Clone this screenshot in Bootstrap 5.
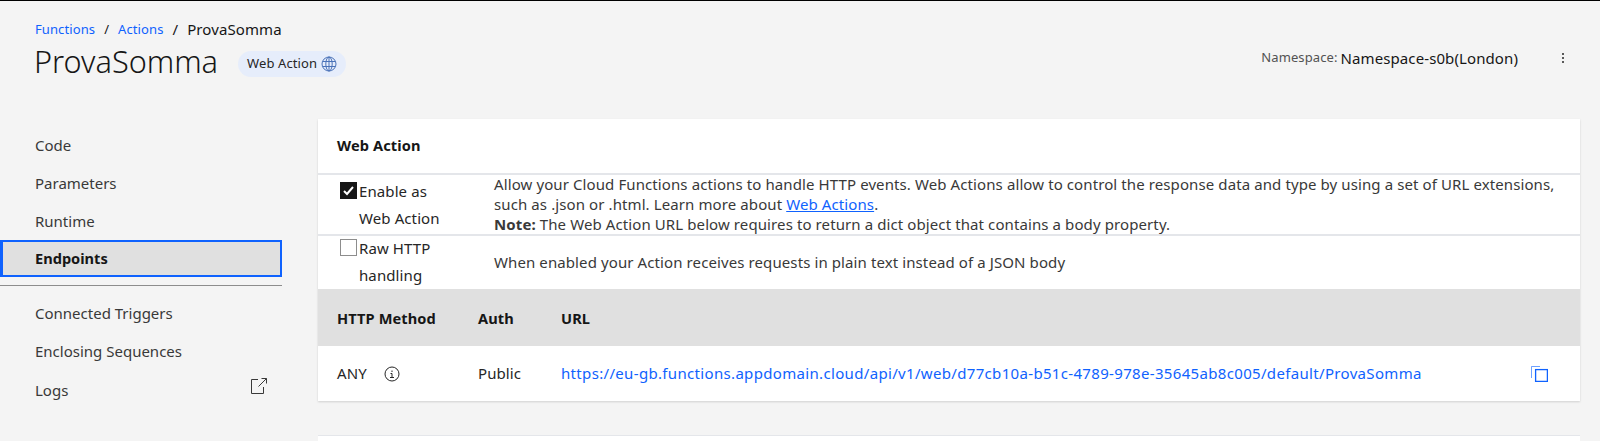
<!DOCTYPE html>
<html lang="en">
<head>
    <meta charset="UTF-8">
    <meta name="viewport" content="width=device-width, initial-scale=1.0">
    <title>ProvaSomma</title>
    <link href="https://cdn.jsdelivr.net/npm/bootstrap@5.3.0/dist/css/bootstrap.min.css" rel="stylesheet">
    <style>
        html, body { height: 441px; overflow: hidden; }
        body {
            background: #f4f4f4;
            border-top: 1px solid #000;
            font-family: "Noto Sans", "Open Sans", sans-serif;
            font-size: 15px;
            letter-spacing: .1px;
            color: #262626;
        }
        a { color: #0f62fe; text-decoration: none; }
        .page-top { padding: 20px 35px 0; height: 118px; }
        .crumbs { font-size: 13px; height: 17px; line-height: 17px; }
        .crumbs .breadcrumb-item + .breadcrumb-item { padding-left: 9px; }
        .crumbs .breadcrumb-item + .breadcrumb-item::before { color: #161616; padding-right: 9px; }
        .crumbs .breadcrumb-item.active { color: #161616; font-size: 15px; }
        .page-title { font-size: 30.7px; font-weight: 300; letter-spacing: 0; color: #161616; line-height: 38px; margin: 0; margin-left: -1px; }
        .action-tag {
            background: #e6edfb; border-radius: 13px; height: 26px;
            padding: 0 9px; margin-left: 20px; margin-top: 6px; font-size: 13px; gap: 4px; color: #262626;
        }
        .ns-group { margin-top: -6px; }
        .ns-label { font-size: 13px; color: #525252; }
        .ns-value { font-size: 15px; color: #161616; margin-left: 3px; }
        .overflow-dots { margin-left: 43px; }
        .side-nav { width: 282px; flex: none; padding-top: 7px; }
        .side-item { height: 38px; padding-left: 35px; display: flex; align-items: center; color: #393939; letter-spacing: 0; }
        .side-item.is-on {
            height: 37px; background: #e0e0e0; border: 2px solid #0f62fe; border-left-width: 3px;
            padding-left: 32px; font-size: 14.6px; font-weight: 700; color: #161616;
        }
        .side-rule { border-top: 1px solid #8d8d8d; margin: 8px 0 8px; }
        .logs-row { padding-top: 2px; }
        .logs-icon { margin-top: -8px; margin-right: 14px; }
        .main-col { margin-left: 36px; width: 1262px; }
        .wa-card { background: #fff; box-shadow: 0 1px 2px rgba(0,0,0,.15); }
        .wa-head { height: 56px; padding: 16px 19px; font-size: 14.6px; font-weight: 700; color: #161616; border-bottom: 2px solid #e4e6ea; }
        .wa-row { border-bottom: 2px solid #e4e6ea; }
        .wa-row1 { height: 61px; }
        .wa-row2 { height: 53px; border-bottom: 0; }
        .check-col { width: 176px; flex: none; padding-left: 22px; line-height: 27px; }
        .wa-row1 .check-col { padding-top: 3px; }
        .wa-row2 .check-col { margin-top: -1px; }
        .fake-box { width: 17px; height: 17px; flex: none; margin-right: 2px; }
        .wa-row2 .fake-box { margin-top: 4px; }
        .desc-col { line-height: 20px; color: #393939; }
        .wa-row1 .desc-col { margin-top: -1px; }
        .wa-row2 .desc-col { margin-top: -2px; }
        .url-head { background: #e0e0e0; height: 57px; padding-top: 2px; font-size: 14.6px; font-weight: 700; color: #161616; }
        .url-row { height: 55px; }
        .cell-method { width: 160px; padding-left: 19px; flex: none; }
        .cell-auth { width: 83px; flex: none; }
        .cell-url { flex: 1; padding-right: 32px; }
        .cell-url a { font-size: 15px; font-weight: 400; letter-spacing: .33px; }
        .any-cell { gap: 17px; }
        .next-card { background: #fff; height: 6px; margin-top: 34px; border-top: 1px solid #e4e6ea; }
    </style>
</head>
<body>
    <div class="page-top">
        <ol class="breadcrumb crumbs mb-0 align-items-center">
            <li class="breadcrumb-item"><a href="#">Functions</a></li>
            <li class="breadcrumb-item"><a href="#">Actions</a></li>
            <li class="breadcrumb-item active">ProvaSomma</li>
        </ol>
        <div class="d-flex align-items-center mt-1">
            <h1 class="page-title">ProvaSomma</h1>
            <span class="action-tag d-inline-flex align-items-center">Web Action
                <svg width="16" height="16" viewBox="0 0 16 16" fill="none" stroke="#4a72b8" stroke-width="1"><circle cx="8" cy="8" r="7"/><ellipse cx="8" cy="8" rx="3.2" ry="7"/><path d="M8 1v14M1.5 5.5h13M1.5 10.5h13"/></svg>
            </span>
            <div class="ns-group ms-auto d-flex align-items-center">
                <span class="ns-label">Namespace:</span>
                <span class="ns-value">Namespace-s0b(London)</span>
                <svg class="overflow-dots" width="4" height="12" viewBox="0 0 4 12" fill="#262626"><circle cx="2" cy="2" r="1"/><circle cx="2" cy="6" r="1"/><circle cx="2" cy="10" r="1"/></svg>
            </div>
        </div>
    </div>
    <div class="d-flex">
        <nav class="side-nav">
            <div class="side-item">Code</div>
            <div class="side-item">Parameters</div>
            <div class="side-item">Runtime</div>
            <div class="side-item is-on">Endpoints</div>
            <div class="side-rule"></div>
            <div class="side-item">Connected Triggers</div>
            <div class="side-item">Enclosing Sequences</div>
            <div class="side-item logs-row justify-content-between">Logs
                <svg class="logs-icon" width="18" height="18" viewBox="0 0 18 18" fill="none" stroke="#393939"><path d="M8 2.5H1.5v14h12V10M8.5 9.5l8-8M11.5 1.5h5v5"/></svg>
            </div>
        </nav>
        <main class="main-col">
            <div class="wa-card">
                <div class="wa-head">Web Action</div>
                <div class="wa-row wa-row1 d-flex">
                    <div class="check-col d-flex">
                        <svg class="fake-box mt-1" viewBox="0 0 17 17"><rect width="17" height="17" fill="#161616"/><path d="M4 9l3 3 6-7" fill="none" stroke="#fff" stroke-width="2"/></svg>
                        <div>Enable as<br>Web Action</div>
                    </div>
                    <div class="desc-col">Allow your Cloud Functions actions to handle HTTP events. Web Actions allow to control the response data and type by using a set of URL extensions, such as .json or .html. Learn more about <a href="#" class="text-decoration-underline">Web Actions</a>.<br><strong>Note:</strong> The Web Action URL below requires to return a dict object that contains a body property.</div>
                </div>
                <div class="wa-row wa-row2 d-flex">
                    <div class="check-col d-flex">
                        <svg class="fake-box" viewBox="0 0 17 17"><rect x=".5" y=".5" width="16" height="16" fill="#fff" stroke="#8d8d8d"/></svg>
                        <div>Raw HTTP<br>handling</div>
                    </div>
                    <div class="desc-col align-self-center">When enabled your Action receives requests in plain text instead of a JSON body</div>
                </div>
                <div class="url-head d-flex align-items-center">
                    <div class="cell-method">HTTP Method</div>
                    <div class="cell-auth">Auth</div>
                    <div class="cell-url">URL</div>
                </div>
                <div class="url-row d-flex align-items-center">
                    <div class="cell-method any-cell d-flex align-items-center">ANY
                        <svg width="16" height="16" viewBox="0 0 16 16" fill="none" stroke="#262626"><circle cx="8" cy="8" r="7"/><path d="M6.5 7.5H8v4M6 11.5h4M8 4.5v1.5"/></svg>
                    </div>
                    <div class="cell-auth">Public</div>
                    <div class="cell-url d-flex align-items-center justify-content-between">
                        <a href="#">https://eu-gb.functions.appdomain.cloud/api/v1/web/d77cb10a-b51c-4789-978e-35645ab8c005/default/ProvaSomma</a>
                        <svg width="17" height="16" viewBox="0 0 17 16" fill="none" stroke="#0f62fe"><rect x="4.6" y="3.6" width="11.8" height="11.8" stroke-width="1.3"/><path d="M.5 12V.5H9" stroke-opacity=".6"/></svg>
                    </div>
                </div>
            </div>
            <div class="next-card"></div>
        </main>
    </div>
    <script src="https://cdn.jsdelivr.net/npm/bootstrap@5.3.0/dist/js/bootstrap.bundle.min.js"></script>
</body>
</html>
